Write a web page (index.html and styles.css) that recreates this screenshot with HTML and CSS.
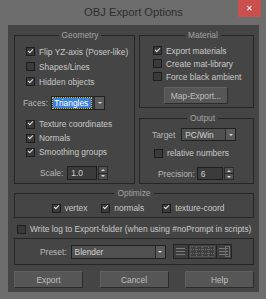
FILE: index.html
```html
<!DOCTYPE html>
<html lang="en">
<head>
    <meta charset="UTF-8">
    <title>OBJ Export Options</title>
    <link rel="stylesheet" href="styles.css">
</head>
<body>
<div class="window">
    <div class="titlebar"><span class="title">OBJ Export Options</span></div>
    <div class="close">&#x2715;</div>

    <div class="panel">
        <div class="top">
            <fieldset class="group geometry">
                <legend>Geometry</legend>
                <label class="check row15"><span class="box on"></span>Flip YZ-axis (Poser-like)</label>
                <label class="check row15"><span class="box"></span>Shapes/Lines</label>
                <label class="check row15"><span class="box on"></span>Hidden objects</label>

                <div class="line faces-line">
                    <span class="lbl faces-lbl">Faces:</span>
                    <div class="select faces"><span class="value"><span class="sel">Triangles</span></span><span class="arrow"></span></div>
                </div>

                <div class="checks2">
                    <label class="check"><span class="box on"></span>Texture coordinates</label>
                    <label class="check"><span class="box on"></span>Normals</label>
                    <label class="check"><span class="box on"></span>Smoothing groups</label>
                </div>

                <div class="line scale-line">
                    <span class="lbl">Scale:</span>
                    <div class="spin scale"><span class="field">1.0</span><span class="arrows"><i class="up"></i><i class="down"></i></span></div>
                </div>
            </fieldset>

            <div class="right">
                <fieldset class="group material">
                    <legend>Material</legend>
                    <label class="check row13"><span class="box on"></span>Export materials</label>
                    <label class="check row13"><span class="box"></span>Create mat-library</label>
                    <label class="check row13"><span class="box"></span>Force black ambient</label>
                    <button class="btn map-btn">Map-Export...</button>
                </fieldset>

                <fieldset class="group output">
                    <legend>Output</legend>
                    <div class="line target-line">
                        <span class="lbl">Target</span>
                        <div class="select target"><span class="value">PC/Win</span><span class="arrow"></span></div>
                    </div>
                    <label class="check relative"><span class="box"></span>relative numbers</label>
                    <div class="line precision-line">
                        <span class="lbl">Precision:</span>
                        <div class="spin precision"><span class="field">6</span><span class="arrows"><i class="up"></i><i class="down"></i></span></div>
                    </div>
                </fieldset>
            </div>
        </div>

        <fieldset class="group optimize">
            <legend>Optimize</legend>
            <div class="opt-row">
                <label class="check"><span class="box on"></span>vertex</label>
                <label class="check opt-normals"><span class="box on"></span>normals</label>
                <label class="check opt-tex"><span class="box on"></span>texture-coord</label>
            </div>
        </fieldset>

        <label class="check log"><span class="box"></span>Write log to Export-folder (when using #noPrompt in scripts)</label>

        <div class="group preset">
            <span class="lbl">Preset:</span>
            <div class="select preset-select"><span class="value">Blender</span><span class="arrow"></span></div>
            <svg class="preset-icons" width="59" height="15" viewBox="0 0 59 15">
                <rect x="0.5" y="0.5" width="58" height="14" fill="#3e3e3e" stroke="#242424"/>
                <g stroke="#7a7a7a" stroke-width="1">
                    <line x1="3" y1="4.5" x2="12" y2="4.5"/>
                    <line x1="3" y1="7.5" x2="12" y2="7.5"/>
                    <line x1="3" y1="10.5" x2="12" y2="10.5"/>
                    <line x1="46" y1="4.5" x2="55" y2="4.5"/>
                    <line x1="46" y1="7.5" x2="55" y2="7.5"/>
                    <line x1="46" y1="10.5" x2="55" y2="10.5"/>
                </g>
                <g stroke="#242424">
                    <line x1="15.5" y1="1" x2="15.5" y2="14"/>
                    <line x1="43.5" y1="1" x2="43.5" y2="14"/>
                </g>
                <g fill="none" stroke="#6c6c6c" stroke-dasharray="1 1">
                    <rect x="17.5" y="2.5" width="24" height="10"/>
                    <line x1="23.5" y1="3" x2="23.5" y2="12"/>
                    <line x1="29.5" y1="3" x2="29.5" y2="12"/>
                    <line x1="35.5" y1="3" x2="35.5" y2="12"/>
                    <line x1="18" y1="5.5" x2="41" y2="5.5"/>
                    <line x1="18" y1="9.5" x2="41" y2="9.5"/>
                </g>
                <rect x="52.5" y="2.5" width="4" height="10" fill="none" stroke="#6c6c6c"/>
            </svg>
        </div>

        <div class="buttons">
            <button class="btn">Export</button>
            <button class="btn">Cancel</button>
            <button class="btn">Help</button>
        </div>
    </div>
</div>
</body>
</html>
```

FILE: styles.css
```css
body {
    margin: 0;
    font-family: "Liberation Sans", Arial, sans-serif;
    font-size: 8.4px;
    color: #c8c8c8;
    background-color: #3a3a3a;
}
.window {
    position: relative;
    width: 266px;
    height: 299px;
    box-sizing: border-box;
    padding: 0 7px 7px 8px;
    background-color: #6d6d6d;
    display: flex;
    flex-direction: column;
}
.titlebar {
    height: 25px;
    display: flex;
    align-items: center;
    justify-content: center;
}
.title {
    font-size: 11.2px;
    color: #2e2e2e;
    margin-top: -1px;
}
.close {
    position: absolute;
    top: 0;
    right: 5px;
    width: 23px;
    height: 17px;
    background-color: #c9504f;
    color: #fff;
    font-size: 8px;
    display: flex;
    align-items: center;
    justify-content: center;
}
.panel {
    flex: 1;
    background-color: #454545;
    padding: 5px 5px 0 6px;
    display: flex;
    flex-direction: column;
}
.top {
    display: flex;
    gap: 4px;
}
fieldset {
    margin: 0;
    min-width: 0;
    border: 1px solid #262626;
}
legend {
    margin: 0 auto;
    padding: 0 3px;
    line-height: 10px;
    color: #a3a3a3;
}
.geometry {
    width: 121px;
    box-sizing: border-box;
    padding: 4px 0 3px 11px;
}
.right {
    width: 115px;
    display: flex;
    flex-direction: column;
}
.material {
    padding: 4px 0 3px 13px;
}
.output {
    margin-top: 5px;
    padding: 5px 0 3px 12px;
}

/* checkboxes */
.check {
    display: flex;
    align-items: center;
    height: 14px;
    white-space: nowrap;
}
.row15 {
    height: 15px;
}
.row13 {
    height: 13px;
}
.box {
    position: relative;
    flex: none;
    width: 9px;
    height: 9px;
    box-sizing: border-box;
    margin-right: 4px;
    border: 1px solid #1e1e1e;
    background-color: #3a3a3a;
}
.box.on::after {
    content: "";
    position: absolute;
    left: 1px;
    top: 0.5px;
    width: 4px;
    height: 2px;
    border-left: 1.5px solid #e6e6e6;
    border-bottom: 1.5px solid #e6e6e6;
    transform: rotate(-45deg);
}

/* label + control lines */
.line {
    display: flex;
    align-items: center;
}
.lbl {
    color: #b8b8b8;
    white-space: nowrap;
}
.faces-line {
    margin: 7px 0 0 -3px;
}
.faces-lbl {
    margin-right: 3px;
}
.checks2 {
    margin-top: 7px;
}
.scale-line {
    margin: 7px 0 0 14px;
}
.scale-line .lbl {
    margin-right: 4px;
}
.target-line .lbl {
    margin-right: 6px;
}
.relative {
    margin: 5px 0 0 2px;
}
.precision-line {
    margin: 7px 0 0 6px;
}
.precision-line .lbl {
    margin-right: 2px;
}

/* dropdowns */
.select {
    display: flex;
    height: 14px;
    box-sizing: border-box;
    border: 1px solid #202020;
    background-color: #505050;
}
.select .value {
    flex: 1;
    display: flex;
    align-items: center;
    padding-left: 3px;
    color: #d0d0d0;
    white-space: nowrap;
}
.select .arrow {
    width: 9px;
    border-left: 1px solid #2a2a2a;
    background-color: #5a5a5a;
    display: flex;
    align-items: center;
    justify-content: center;
}
.select .arrow::after {
    content: "";
    border-top: 2px solid #dcdcdc;
    border-left: 2px solid transparent;
    border-right: 2px solid transparent;
}
.faces {
    width: 54px;
    background-color: #3c3c3c;
}
.faces .value {
    padding-left: 1px;
}
.sel {
    background-color: #3a82dc;
    color: #fff;
    padding: 0 3px 0 1px;
    line-height: 10px;
    outline: 1px dotted #c9b65a;
}
.target {
    width: 55px;
    height: 13px;
}
.preset-select {
    width: 95px;
    margin-right: 7px;
}

/* spinners */
.spin {
    display: flex;
    height: 14px;
}
.spin .field {
    box-sizing: border-box;
    border: 1px solid #1e1e1e;
    background-color: #3b3b3b;
    padding-left: 3px;
    display: flex;
    align-items: center;
    color: #d0d0d0;
}
.scale .field {
    width: 30px;
}
.precision {
    height: 13px;
}
.precision .field {
    width: 26px;
}
.arrows {
    width: 10px;
    display: flex;
    flex-direction: column;
    margin-left: 1px;
}
.arrows i {
    flex: 1;
    background-color: #505050;
    border: 1px solid #2a2a2a;
    display: flex;
    align-items: center;
    justify-content: center;
}
.arrows i + i {
    border-top: none;
}
.arrows .up::after {
    content: "";
    border-bottom: 2px solid #d6d6d6;
    border-left: 2px solid transparent;
    border-right: 2px solid transparent;
}
.arrows .down::after {
    content: "";
    border-top: 2px solid #d6d6d6;
    border-left: 2px solid transparent;
    border-right: 2px solid transparent;
}

/* buttons */
.btn {
    font-family: inherit;
    font-size: 8.4px;
    color: #bebebe;
    background-color: #565656;
    border: 1px solid #2b2b2b;
    border-top-color: #616161;
    border-left-color: #616161;
    height: 17px;
    padding: 0;
}
.map-btn {
    display: block;
    width: 64px;
    margin: 4px 0 0 11px;
}

.optimize {
    margin-top: 4px;
    padding: 3px 0 2px 0;
}
.opt-row {
    display: flex;
    justify-content: center;
    padding-left: 8px;
}
.opt-normals {
    margin-left: 14px;
}
.opt-tex {
    margin-left: 18px;
}
.log {
    margin: 4px 0 0 3px;
}
.preset {
    margin-top: 2px;
    border: 1px solid #262626;
    padding: 5px 0 5px 25px;
    display: flex;
    align-items: center;
}
.preset .lbl {
    margin-right: 4px;
}
.buttons {
    margin-top: 6px;
    display: flex;
    justify-content: space-between;
}
.buttons .btn {
    width: 69px;
}
```
